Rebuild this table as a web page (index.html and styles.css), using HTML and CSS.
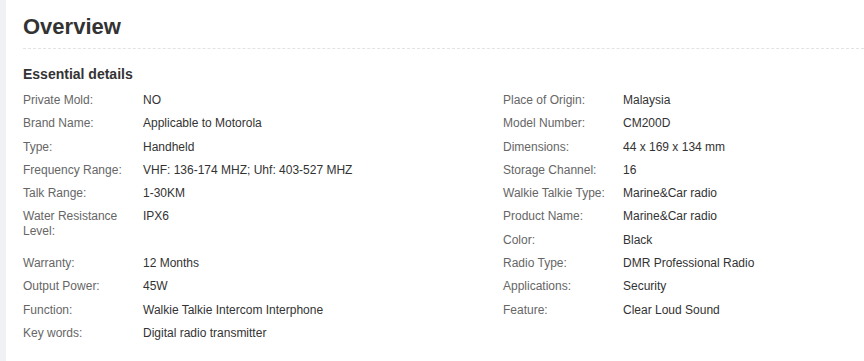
FILE: index.html
```html
<!DOCTYPE html>
<html lang="en">
<head>
  <meta charset="UTF-8">
  <meta name="viewport" content="width=device-width, initial-scale=1">
  <title>Overview</title>
  <link rel="stylesheet" href="styles.css">
</head>
<body>
  <div class="page">
    <div class="panel">
      <h2 class="panel-title">Overview</h2>
      <h3 class="section-title">Essential details</h3>
      <div class="details">
        <!-- columna izquierda -->
        <dl class="attr-list">
          <div class="attr"><dt>Private Mold:</dt><dd>NO</dd></div>
          <div class="attr"><dt>Brand Name:</dt><dd>Applicable to Motorola</dd></div>
          <div class="attr"><dt>Type:</dt><dd>Handheld</dd></div>
          <div class="attr"><dt>Frequency Range:</dt><dd>VHF: 136-174 MHZ; Uhf: 403-527 MHZ</dd></div>
          <div class="attr"><dt>Talk Range:</dt><dd>1-30KM</dd></div>
          <div class="attr tall"><dt>Water Resistance Level:</dt><dd>IPX6</dd></div>
          <div class="attr"><dt>Warranty:</dt><dd>12 Months</dd></div>
          <div class="attr"><dt>Output Power:</dt><dd>45W</dd></div>
          <div class="attr"><dt>Function:</dt><dd>Walkie Talkie Intercom Interphone</dd></div>
          <div class="attr"><dt>Key words:</dt><dd>Digital radio transmitter</dd></div>
        </dl>
        <!-- columna derecha -->
        <dl class="attr-list">
          <div class="attr"><dt>Place of Origin:</dt><dd>Malaysia</dd></div>
          <div class="attr"><dt>Model Number:</dt><dd>CM200D</dd></div>
          <div class="attr"><dt>Dimensions:</dt><dd>44 x 169 x 134 mm</dd></div>
          <div class="attr"><dt>Storage Channel:</dt><dd>16</dd></div>
          <div class="attr"><dt>Walkie Talkie Type:</dt><dd>Marine&amp;Car radio</dd></div>
          <div class="attr"><dt>Product Name:</dt><dd>Marine&amp;Car radio</dd></div>
          <div class="attr"><dt>Color:</dt><dd>Black</dd></div>
          <div class="attr"><dt>Radio Type:</dt><dd>DMR Professional Radio</dd></div>
          <div class="attr"><dt>Applications:</dt><dd>Security</dd></div>
          <div class="attr"><dt>Feature:</dt><dd>Clear Loud Sound</dd></div>
        </dl>
      </div>
    </div>
  </div>
</body>
</html>
```

FILE: styles.css
```css
/* Reset básico */
* {
  margin: 0;
  padding: 0;
  box-sizing: border-box;
}
body {
  font-family: "Liberation Sans", Arial, sans-serif;
  background: #f0f1f5;
  color: #333;
  overflow: hidden;
}
.page {
  padding-left: 6px;
  min-height: 100vh;
}
.panel {
  background: #fff;
  min-height: 100vh;
  padding: 12px 0 20px 17px;
}
.panel-title {
  font-size: 22px;
  line-height: 30px;
  font-weight: bold;
  color: #333;
  padding-bottom: 6px;
  border-bottom: 1px dashed #e3e3e3;
}
.section-title {
  font-size: 14px;
  line-height: 20px;
  font-weight: bold;
  color: #333;
  margin-top: 15px;
}
.details {
  display: grid;
  grid-template-columns: 480px 1fr;
  margin-top: 9px;
}
.attr-list {
  display: grid;
  grid-auto-rows: 23.3px;
}
.attr {
  display: flex;
  font-size: 12px;
  line-height: 15px;
}
.attr.tall {
  grid-row: span 2;
}
.attr dt {
  width: 120px;
  flex-shrink: 0;
  padding-right: 10px;
  color: #666;
}
.attr dd {
  color: #333;
}
```
